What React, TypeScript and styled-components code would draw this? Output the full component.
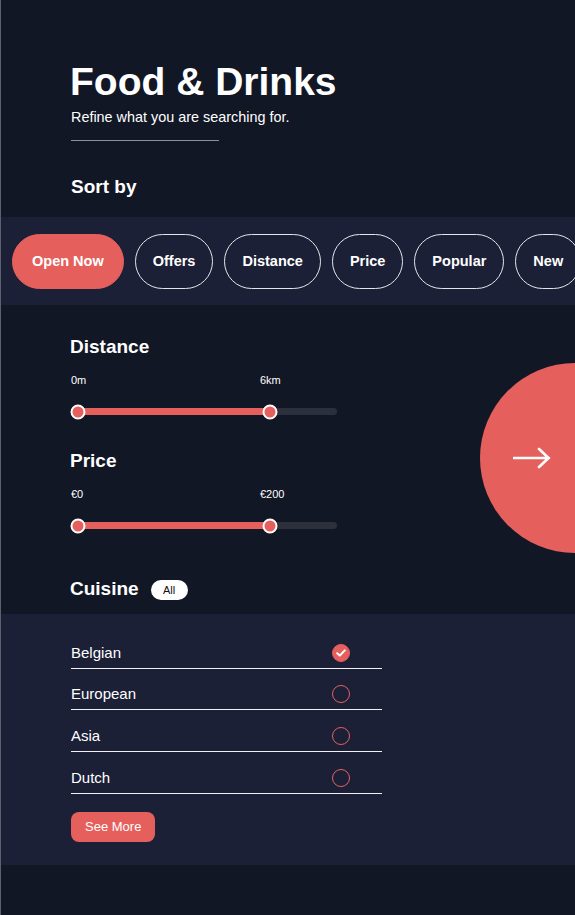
import React, { useState } from "react";
import styled, { createGlobalStyle } from "styled-components";

const GlobalStyle = createGlobalStyle`
  html, body {
    margin: 0;
    padding: 0;
    background: #121726;
  }
  body {
    font-family: "Liberation Sans", Arial, sans-serif;
    color: #fff;
  }
`;

const RED = "#e5605d";
const TRACK_WIDTH = 259;

const sortOptions = ["Open Now", "Offers", "Distance", "Price", "Popular", "New"];
const cuisines = ["Belgian", "European", "Asia", "Dutch"];

type RangeProps = {
  title: string;
  min: string;
  max: string;
  value: number;
};

const RangeFilter = ({ title, min, max, value }: RangeProps) => (
  <Filter>
    <SectionTitle>{title}</SectionTitle>
    <RangeLabels>
      {/* max label sits just left of the upper thumb */}
      <span style={{ width: Math.round(value * TRACK_WIDTH) - 3 }}>{min}</span>
      <span>{max}</span>
    </RangeLabels>
    <Track>
      <Fill style={{ width: `${value * 100}%` }}>
        <Thumb />
        <Thumb $end />
      </Fill>
    </Track>
  </Filter>
);

const App = () => {
  const [sort, setSort] = useState("Open Now");
  const [checked, setChecked] = useState<string[]>(["Belgian"]);

  const toggle = (name: string) =>
    setChecked(c => (c.includes(name) ? c.filter(n => n !== name) : [...c, name]));

  return (
    <>
      <GlobalStyle />
      <Page>
        <Header>
          <Title>Food &amp; Drinks</Title>
          <Subtitle>Refine what you are searching for.</Subtitle>
          <Divider />
          <SortTitle>Sort by</SortTitle>
        </Header>
        <ChipBand>
          {sortOptions.map(opt => (
            <Chip key={opt} $active={opt === sort} onClick={() => setSort(opt)}>
              {opt}
            </Chip>
          ))}
        </ChipBand>
        <Filters>
          <RangeFilter title="Distance" min="0m" max="6km" value={0.742} />
          <RangeFilter title="Price" min="€0" max="€200" value={0.742} />
          <NextButton aria-label="Next">
            <svg width="38" height="22" viewBox="0 0 38 22" fill="none">
              <path
                d="M1 11h35M26 2l9.5 9L26 20"
                stroke="#fff"
                strokeWidth="2.6"
                strokeLinecap="round"
                strokeLinejoin="round"
              />
            </svg>
          </NextButton>
          <CuisineHeader>
            <SectionTitle>Cuisine</SectionTitle>
            <AllTag>All</AllTag>
          </CuisineHeader>
        </Filters>
        <CuisineBand>
          <CuisineList>
            {cuisines.map(name => (
              <CuisineRow key={name} onClick={() => toggle(name)}>
                <span>{name}</span>
                <Check $checked={checked.includes(name)}>
                  {checked.includes(name) && (
                    <svg width="10" height="8" viewBox="0 0 10 8" fill="none">
                      <path
                        d="M1.2 4.2l2.6 2.4L8.8 1.4"
                        stroke="#fff"
                        strokeWidth="2"
                        strokeLinecap="round"
                        strokeLinejoin="round"
                      />
                    </svg>
                  )}
                </Check>
              </CuisineRow>
            ))}
          </CuisineList>
          <SeeMore>See More</SeeMore>
        </CuisineBand>
        <Footer />
      </Page>
    </>
  );
};

export default App;

const Page = styled.div`
  width: 575px;
  min-height: 915px;
  box-sizing: border-box;
  border-left: 1px solid #5d616c;
  overflow: hidden;
  position: relative;
`;

const Header = styled.div`
  padding: 62px 0 0 69px;
`;

const Title = styled.h1`
  margin: 0;
  font-size: 39px;
  line-height: 40px;
  font-weight: 700;
`;

const Subtitle = styled.p`
  margin: 7px 0 0 1px;
  font-size: 14.4px;
  line-height: 17px;
`;

const Divider = styled.div`
  width: 148px;
  height: 1px;
  margin: 14px 0 0 1px;
  background: #8d9099;
`;

const SortTitle = styled.h2`
  margin: 35px 0 0 1px;
  font-size: 19px;
  line-height: 22px;
  font-weight: 700;
`;

const ChipBand = styled.div`
  margin-top: 19px;
  height: 88px;
  background: #1b2036;
  display: flex;
  align-items: center;
  gap: 11px;
  padding-left: 11px;
  overflow: hidden;
`;

const Chip = styled.button<{ $active: boolean }>`
  flex: none;
  height: 55px;
  padding: 0 ${p => (p.$active ? "19px" : "17px")};
  border-radius: 28px;
  border: 1px solid ${p => (p.$active ? RED : "#e6e6ea")};
  background: ${p => (p.$active ? RED : "transparent")};
  color: #fff;
  font-family: "Liberation Sans", Arial, sans-serif;
  font-size: 14.5px;
  font-weight: 700;
  cursor: pointer;
`;

const Filters = styled.div`
  position: relative;
  padding: 31px 0 0 69px;
`;

const Filter = styled.div`
  width: 267px;
  margin-bottom: 35px;
`;

const SectionTitle = styled.h3`
  margin: 0;
  font-size: 19px;
  line-height: 22px;
  font-weight: 700;
`;

const RangeLabels = styled.div`
  display: flex;
  margin: 16px 0 0 1px;
  font-size: 11px;
  line-height: 13px;
  & span {
    flex: none;
  }
`;

const Track = styled.div`
  margin: 21px 0 0 8px;
  width: ${TRACK_WIDTH}px;
  height: 7px;
  border-radius: 4px;
  background: #2c303d;
`;

const Fill = styled.div`
  position: relative;
  height: 100%;
  border-radius: 4px;
  background: ${RED};
`;

const Thumb = styled.div<{ $end?: boolean }>`
  position: absolute;
  top: 50%;
  left: ${p => (p.$end ? "100%" : "0")};
  width: 11px;
  height: 11px;
  border-radius: 50%;
  background: ${RED};
  border: 2.5px solid #fff;
  transform: translate(-50%, -50%);
`;

const NextButton = styled.button`
  position: absolute;
  top: 58px;
  left: 479px;
  width: 190px;
  height: 190px;
  border-radius: 50%;
  border: none;
  background: ${RED};
  padding: 0 0 0 33px;
  display: flex;
  align-items: center;
  cursor: pointer;
`;

const CuisineHeader = styled.div`
  display: flex;
  align-items: center;
  gap: 12px;
  margin-top: 49px;
`;

const AllTag = styled.span`
  display: inline-flex;
  align-items: center;
  justify-content: center;
  width: 37px;
  height: 20px;
  border-radius: 10px;
  background: #fff;
  color: #111;
  font-size: 11px;
  margin-top: 1px;
`;

const CuisineBand = styled.div`
  margin-top: 14px;
  background: #1b2036;
  padding: 13px 0 23px 70px;
`;

const CuisineList = styled.div`
  width: 311px;
`;

const CuisineRow = styled.div`
  display: flex;
  align-items: flex-end;
  justify-content: space-between;
  height: 41.7px;
  border-bottom: 1.5px solid #f2f2f4;
  box-sizing: border-box;
  padding: 0 32px 7px 0;
  font-size: 15px;
  line-height: 17px;
  cursor: pointer;
`;

const Check = styled.span<{ $checked: boolean }>`
  display: flex;
  align-items: center;
  justify-content: center;
  width: 18px;
  height: 18px;
  margin-bottom: -1px;
  box-sizing: border-box;
  border-radius: 50%;
  border: 1.5px solid ${RED};
  background: ${p => (p.$checked ? RED : "transparent")};
`;

const SeeMore = styled.button`
  margin-top: 18px;
  height: 30px;
  padding: 0 14px;
  border: none;
  border-radius: 8px;
  background: ${RED};
  color: #fff;
  font-family: "Liberation Sans", Arial, sans-serif;
  font-size: 13px;
  cursor: pointer;
`;

const Footer = styled.div`
  height: 51px;
`;
